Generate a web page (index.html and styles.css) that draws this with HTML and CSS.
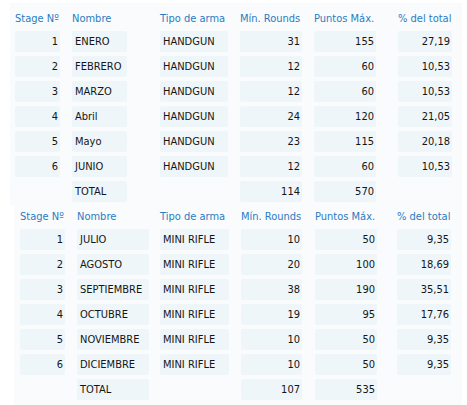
FILE: index.html
```html
<!DOCTYPE html>
<html lang="es">
<head>
<meta charset="utf-8">
<link rel="stylesheet" href="styles.css">
</head>
<body>
<div class="page">
  <div class="sheet sheet-1">
    <div class="grid grid-1">
      <div class="hd">Stage Nº</div><div class="hd">Nombre</div><div class="hd">Tipo de arma</div><div class="hd">Mín. Rounds</div><div class="hd">Puntos Máx.</div><div class="hd">% del total</div>

      <div class="c c1 num">1</div><div class="c c2">ENERO</div><div class="c c3">HANDGUN</div><div class="c c4 num">31</div><div class="c c5 num">155</div><div class="c c6 num">27,19</div>
      <div class="c c1 num">2</div><div class="c c2">FEBRERO</div><div class="c c3">HANDGUN</div><div class="c c4 num">12</div><div class="c c5 num">60</div><div class="c c6 num">10,53</div>
      <div class="c c1 num">3</div><div class="c c2">MARZO</div><div class="c c3">HANDGUN</div><div class="c c4 num">12</div><div class="c c5 num">60</div><div class="c c6 num">10,53</div>
      <div class="c c1 num">4</div><div class="c c2">Abril</div><div class="c c3">HANDGUN</div><div class="c c4 num">24</div><div class="c c5 num">120</div><div class="c c6 num">21,05</div>
      <div class="c c1 num">5</div><div class="c c2">Mayo</div><div class="c c3">HANDGUN</div><div class="c c4 num">23</div><div class="c c5 num">115</div><div class="c c6 num">20,18</div>
      <div class="c c1 num">6</div><div class="c c2">JUNIO</div><div class="c c3">HANDGUN</div><div class="c c4 num">12</div><div class="c c5 num">60</div><div class="c c6 num">10,53</div>
      <div class="e"></div><div class="c c2">TOTAL</div><div class="e"></div><div class="c c4 num">114</div><div class="c c5 num">570</div><div class="e"></div>
    </div>
  </div>
  <div class="sheet sheet-2">
    <div class="grid grid-2">
      <div class="hd">Stage Nº</div><div class="hd">Nombre</div><div class="hd">Tipo de arma</div><div class="hd">Mín. Rounds</div><div class="hd">Puntos Máx.</div><div class="hd">% del total</div>

      <div class="c c1 num">1</div><div class="c c2">JULIO</div><div class="c c3">MINI RIFLE</div><div class="c c4 num">10</div><div class="c c5 num">50</div><div class="c c6 num">9,35</div>
      <div class="c c1 num">2</div><div class="c c2">AGOSTO</div><div class="c c3">MINI RIFLE</div><div class="c c4 num">20</div><div class="c c5 num">100</div><div class="c c6 num">18,69</div>
      <div class="c c1 num">3</div><div class="c c2">SEPTIEMBRE</div><div class="c c3">MINI RIFLE</div><div class="c c4 num">38</div><div class="c c5 num">190</div><div class="c c6 num">35,51</div>
      <div class="c c1 num">4</div><div class="c c2">OCTUBRE</div><div class="c c3">MINI RIFLE</div><div class="c c4 num">19</div><div class="c c5 num">95</div><div class="c c6 num">17,76</div>
      <div class="c c1 num">5</div><div class="c c2">NOVIEMBRE</div><div class="c c3">MINI RIFLE</div><div class="c c4 num">10</div><div class="c c5 num">50</div><div class="c c6 num">9,35</div>
      <div class="c c1 num">6</div><div class="c c2">DICIEMBRE</div><div class="c c3">MINI RIFLE</div><div class="c c4 num">10</div><div class="c c5 num">50</div><div class="c c6 num">9,35</div>
      <div class="e"></div><div class="c c2">TOTAL</div><div class="e"></div><div class="c c4 num">107</div><div class="c c5 num">535</div><div class="e"></div>
    </div>
  </div>
</div>
</body>
</html>
```

FILE: styles.css
```css
html, body {
  margin: 0;
  padding: 0;
  background: #ffffff;
}
body {
  font-family: "DejaVu Sans Condensed", "DejaVu Sans", sans-serif;
  font-stretch: condensed;
  font-size: 11px;
  color: #151515;
  width: 467px;
  height: 405px;
  overflow: hidden;
}
.page {
  padding-top: 3px;
}
.sheet {
  background: #f9fbfc;
  margin-right: 5px;
}
.sheet-1 {
  margin-left: 10px;
  padding: 8px 0 3px 5px;
}
.sheet-2 {
  margin-left: 14px;
  padding: 4px 0 5px 6px;
}
.grid {
  display: grid;
  grid-template-rows: 16px repeat(7, 21px);
  row-gap: 4px;
}
.grid-1 {
  grid-template-columns: 57px 88px 80px 74px 84px 54px;
}
.grid-2 {
  grid-template-columns: 57px 83px 81px 74px 82px 54px;
}
.hd {
  color: #2a7bc2;
  line-height: 16px;
  white-space: nowrap;
}
.c {
  background: #eef6fa;
  border-radius: 2px;
  line-height: 21px;
  padding: 0 2px 0 3px;
  white-space: nowrap;
  box-sizing: border-box;
}
.num {
  text-align: right;
}
.grid-1 .c1 { width: 45px; }
.grid-1 .c2 { width: 55px; }
.grid-1 .c3 { width: 68px; }
.grid-1 .c4 { width: 62px; }
.grid-1 .c5 { width: 62px; }
.grid-1 .c6 { width: 54px; }
.grid-2 .c1 { width: 45px; }
.grid-2 .c2 { width: 72px; }
.grid-2 .c3 { width: 69px; }
.grid-2 .c4 { width: 61px; }
.grid-2 .c5 { width: 62px; }
.grid-2 .c6 { width: 54px; }
```
